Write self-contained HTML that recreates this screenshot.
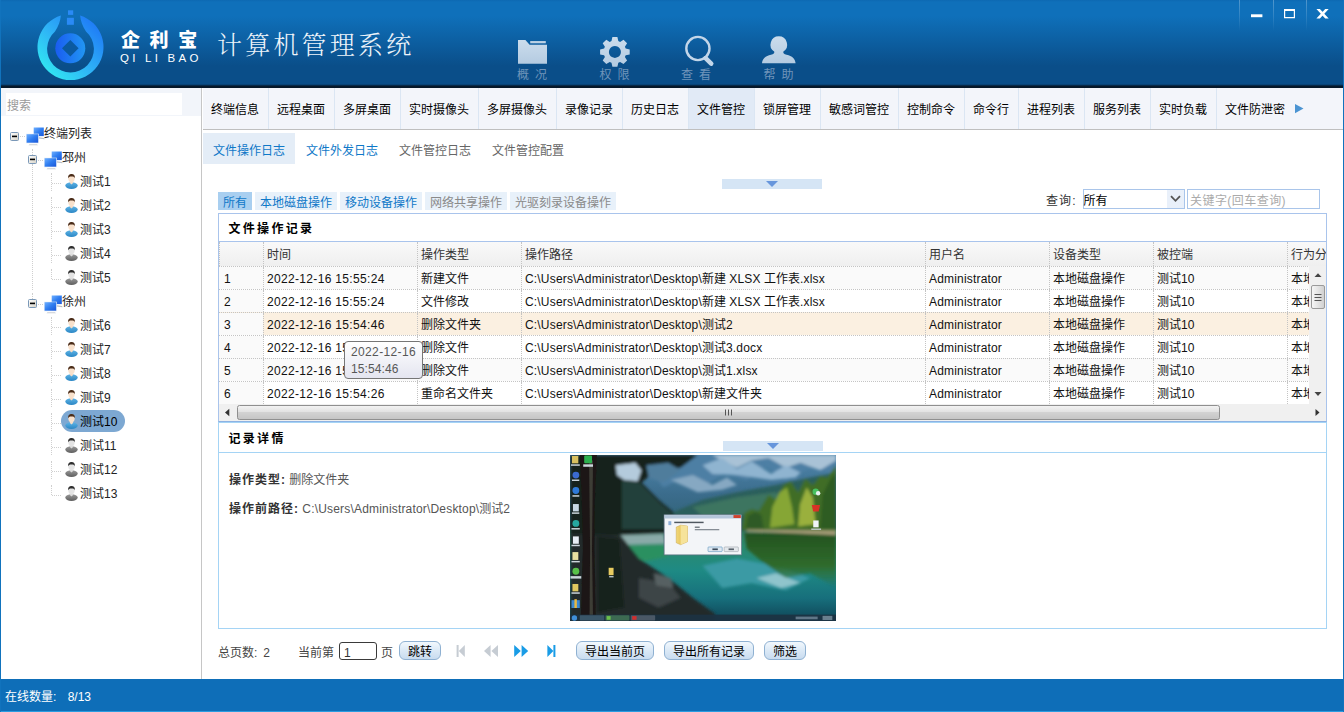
<!DOCTYPE html>
<html lang="zh-CN">
<head>
<meta charset="utf-8">
<title>企利宝 计算机管理系统</title>
<style>
*{box-sizing:border-box;margin:0;padding:0}
html,body{width:1344px;height:712px;overflow:hidden;background:#fff}
body{position:relative;font-family:"Liberation Sans","Noto Sans CJK SC",sans-serif;font-size:12px;color:#000;line-height:1}
.abs{position:absolute}
/* window frame */
#frameL{left:0;top:0;width:1px;height:712px;background:#1173bd}
#frameR{left:1343px;top:0;width:1px;height:712px;background:#1173bd}
/* header */
#hdr{left:0;top:0;width:1344px;height:88px;background:linear-gradient(to bottom,#0d69b2 0,#0f70ba 2px,#0f70ba 16px,#0a4e89 66px,#0a4e89 84px,#083a66 85px,#06182a 86px,#06182a 88px)}
#brand{left:121px;top:29px;color:#fff;font-weight:900;font-size:19px;letter-spacing:9.6px;white-space:nowrap;line-height:24px}
#brand2{left:120px;top:51px;color:#fff;font-size:11.5px;letter-spacing:3.25px;white-space:nowrap;line-height:14px;font-weight:400}
#title{left:217px;top:28px;color:#eef4fa;font-family:"Liberation Serif","Noto Serif CJK SC",serif;font-weight:300;font-size:25px;letter-spacing:3.2px;white-space:nowrap;line-height:36px}
.tool{top:36px;width:60px;height:48px;text-align:center;color:#6f94ba;font-size:12px;word-spacing:2.7px}
.tool span{position:absolute;left:0;width:60px;top:32px;line-height:14px}
.wsep{top:0;width:1px;height:31px;background:linear-gradient(to bottom,rgba(255,255,255,.28),rgba(255,255,255,0))}
/* status bar */
#status{left:0;top:679px;width:1344px;height:33px;background:#0e6eb8;border-bottom:1px solid #2a9ce0;color:#fff;padding:12px 0 0 5px}
/* left panel */
#left{left:1px;top:88px;width:200px;height:591px;background:#fff}
#leftB{left:201px;top:88px;width:1px;height:591px;background:#c6c6c6}
#searchbar{left:0;top:0;width:200px;height:28px;background:#f2f5fa}
#search{left:5px;top:5px;width:176px;height:22px;background:#fff;color:#9a9a9a;padding:7px 0 0 1px}
.tn{position:absolute;height:24px;line-height:24px;white-space:nowrap;color:#222}
.vd{width:0;border-left:1px dotted #cfcfcf}
.hd{height:0;border-top:1px dotted #cfcfcf}
/* tabs */
#tabs{left:203px;top:88px;width:1140px;height:42px;background:#f3f5fa;border-bottom:1px solid #bfbfbf}
.tab{position:absolute;top:0;height:41px;line-height:44px;overflow:hidden;text-align:center;color:#000;border-right:1px solid #dbe6f3;padding-right:1px}
.tab.on{background:#e1eaf6}
.tab:nth-last-of-type(1){border-right-color:transparent}
.stab{position:absolute;top:133px;height:31px;width:92px;line-height:37px;overflow:hidden;text-align:center;color:#666}
.stab.b{color:#0f78c8}
.stab.on{background:#e4edf7}
.flt{position:absolute;top:192px;height:18px;line-height:23px;overflow:hidden;text-align:center;background:#e8f1fa;color:#0f78c8}
.flt.g{color:#8a8a8a}
.flt.on{background:#a9cff0}
.coll{width:100px;height:10px;background:#d5e5f5}
.coll:after{content:"";position:absolute;left:44px;top:2px;border:6px solid transparent;border-top:6px solid #6796dc;border-bottom:0}
#p1{left:218px;top:213px;width:1109px;height:209px;border:1px solid #a9c4ec;border-bottom:1px solid #8db2e3;background:#fff}
.ptitle{left:9.5px;top:1px;height:27px;line-height:28px;font-weight:bold;letter-spacing:2.3px;color:#000;white-space:nowrap}
#grid{left:0;top:27px;width:1107px;height:163px;border-top:1px solid #a9c4ec;overflow:hidden}
.r{position:absolute;left:0;width:1107px;height:23px;border-top:1px dotted #c4c4c4;background:#fff}
.r.odd{background:#fafafa}
.r.sel{background:#fbf0e1}
.r.hd0{border-top:0;background:linear-gradient(to bottom,#f9f9f9,#efefef);color:#333}
.c{position:absolute;top:0;height:100%;border-left:1px dotted #c4c4c4;padding:6px 0 0 3px;white-space:nowrap;overflow:hidden;color:#111}
.r.hd0 .c{padding-top:7px;color:#333}
.c.n{border-left:0;background:#fafafa;padding-left:5px}
.r.sel .c.n{background:#fafafa}
#p2{left:218px;top:422px;width:1109px;height:207px;border:1px solid #a5d4f5;background:#fff}
.dl{white-space:nowrap;color:#333;line-height:14px}
.dl b{letter-spacing:1px}
.dv{color:#555}
.l{letter-spacing:.18px}
.d{letter-spacing:.33px}
.pg{color:#444;white-space:nowrap;line-height:14px}
.btn{top:641px;height:19px;border:1px solid #8fb1d2;border-radius:6px;background:linear-gradient(to bottom,#f2f8fd 0,#dbe9f6 50%,#c9dcef 100%);text-align:center;line-height:20px;color:#000;white-space:nowrap}
</style>
</head>
<body>
<div id="hdr" class="abs">
<svg class="abs" style="left:30px;top:4px" width="82" height="82" viewBox="30 4 82 82">
<defs>
<linearGradient id="lg1" x1="0.15" y1="0.9" x2="0.9" y2="0.15"><stop offset="0" stop-color="#31e6f2"/><stop offset="0.45" stop-color="#2fb4f6"/><stop offset="1" stop-color="#1f7cf6"/></linearGradient>
<linearGradient id="lg2" x1="0" y1="0.5" x2="1" y2="0.5"><stop offset="0" stop-color="#1a5cf0"/><stop offset="1" stop-color="#2196f3"/></linearGradient>
</defs>
<path d="M60.9 15.5 A33 33 0 1 0 80.1 15.5 C80.6 21 82.5 26 86 31.5 A23.4 23.4 0 1 1 55 31.5 C58.5 26 60.4 21 60.9 15.5Z" fill="url(#lg1)"/>
<circle cx="70.3" cy="48.3" r="15" fill="url(#lg2)"/>
<path d="M70.3 40 L78.6 48.3 L70.3 56.6 L62 48.3Z" fill="#0b5aa0"/>
<rect x="68" y="10.3" width="5.2" height="4.6" fill="#2a8af6"/>
<rect x="66.9" y="17.8" width="7" height="7" fill="#2a8af6"/>
</svg>
<div id="brand" class="abs">企利宝</div>
<div id="brand2" class="abs">QI LI BAO</div>
<div id="title" class="abs">计算机管理系统</div>
<svg class="abs" style="left:500px;top:30px" width="320" height="40" viewBox="500 30 320 40">
<defs><linearGradient id="ig" x1="0" y1="0" x2="0" y2="1"><stop offset="0" stop-color="#cbdcec"/><stop offset="1" stop-color="#b4cbe1"/></linearGradient></defs>
<g fill="url(#ig)">
<path d="M518 40 H525.4 L529.6 44.8 H547 V63.8 H518Z"/>
<rect x="530.2" y="41.1" width="15.6" height="2.2"/>
<path id="gear" fill-rule="evenodd" d="M612.4 37.1 L617.4 37.1 L618.3 41.1 L620.1 41.9 L623.5 39.7 L627.1 43.3 L624.9 46.7 L625.7 48.5 L629.7 49.4 L629.7 54.4 L625.7 55.3 L624.9 57.1 L627.1 60.5 L623.5 64.1 L620.1 61.9 L618.3 62.7 L617.4 66.7 L612.4 66.7 L611.5 62.7 L609.7 61.9 L606.3 64.1 L602.7 60.5 L604.9 57.1 L604.1 55.3 L600.1 54.4 L600.1 49.4 L604.1 48.5 L604.9 46.7 L602.7 43.3 L606.3 39.7 L609.7 41.9 L611.5 41.1 Z M614.9 45.9 a6 6 0 1 0 0.01 0Z"/>
<path d="M778.8 36.3 a8.3 8.3 0 0 1 4.6 15.2 c-0.6 1.6 0.6 2.6 3.2 3.2 c5.6 1.2 8.6 4 9 8.5 H762 c0.4 -4.5 3.4 -7.3 9 -8.5 c2.6 -0.6 3.8 -1.6 3.2 -3.2 a8.3 8.3 0 0 1 4.6 -15.2Z"/>
</g>
<circle cx="697.9" cy="48.5" r="11.6" fill="none" stroke="#c3d6e9" stroke-width="2.4"/>
<path d="M705.6 58.2 L711.2 63.6" stroke="#c3d6e9" stroke-width="4.6" stroke-linecap="round"/>
</svg>
<div class="tool abs" style="left:502px"><span>概 况</span></div>
<div class="tool abs" style="left:584.6px"><span>权 限</span></div>
<div class="tool abs" style="left:666px"><span>查 看</span></div>
<div class="tool abs" style="left:748.5px"><span>帮 助</span></div>
<div class="wsep abs" style="left:1239px"></div>
<div class="wsep abs" style="left:1273px"></div>
<div class="wsep abs" style="left:1306px"></div>
<svg class="abs" style="left:1245px;top:5px" width="90" height="18" viewBox="1245 5 90 18">
<rect x="1251" y="14.3" width="11.4" height="2.9" fill="#fff"/>
<path d="M1284 9 h11 v9.2 h-11Z M1285.2 11 v6 h8.6 v-6Z" fill="#fff" fill-rule="evenodd"/>
<path d="M1316.4 8.9 h3.5 l8.8 9.5 h-3.5Z M1325.2 8.9 h3.5 l-8.8 9.5 h-3.5Z" fill="#fff"/>
</svg>
</div>
<div id="status" class="abs">在线数量<span style="letter-spacing:4px">: </span>8/13</div>
<div id="left" class="abs">
  <div id="searchbar" class="abs"><div id="search" class="abs">搜索</div></div>
</div>
<svg width="0" height="0" style="position:absolute">
<defs>
<linearGradient id="mon" x1="0" y1="0" x2="1" y2="1"><stop offset="0" stop-color="#6fb0ff"/><stop offset="0.5" stop-color="#2f7df0"/><stop offset="1" stop-color="#1a56d8"/></linearGradient>
<linearGradient id="ub" x1="0" y1="0" x2="0" y2="1"><stop offset="0" stop-color="#5fb4e6"/><stop offset="1" stop-color="#2a86c4"/></linearGradient>
<linearGradient id="ug" x1="0" y1="0" x2="0" y2="1"><stop offset="0" stop-color="#9a9a9a"/><stop offset="1" stop-color="#5e5e5e"/></linearGradient>
<linearGradient id="bx" x1="0" y1="0" x2="1" y2="1"><stop offset="0" stop-color="#ffffff"/><stop offset="1" stop-color="#d6d2c6"/></linearGradient>
<symbol id="pcs" viewBox="0 0 20 20" overflow="visible">
<path d="M13 10.2 l5 0.8 l0.6 1.2 l-6 -0.6Z" fill="#b9bec6"/>
<rect x="7.7" y="0.5" width="10.1" height="8.6" fill="url(#mon)"/>
<path d="M3.5 17.2 h7.5 l1 1 h-9.5Z" fill="#c9cdd3"/>
<rect x="0" y="6.7" width="12.8" height="9.6" fill="#e9eef6"/>
<rect x="0.6" y="7.2" width="11.6" height="8.5" fill="url(#mon)"/>
</symbol>
<symbol id="usrb" viewBox="0 0 13 15" overflow="visible">
<ellipse cx="6.5" cy="11.6" rx="6.2" ry="3.4" fill="url(#ub)"/>
<path d="M4.9 7 h3.2 v2 l-1.6 1.6 l-1.6 -1.6Z" fill="#f6dcc6"/>
<ellipse cx="6.5" cy="4.4" rx="3.2" ry="3.7" fill="#f8e1cc"/>
<path d="M3.2 4.2 C2.8 1 4.6 0 6.6 0 C8.8 0 10.2 1.2 9.8 4.2 C9.3 2.8 8.2 2.4 6.5 2.6 C5 2.4 3.8 2.9 3.2 4.2Z" fill="#4a2c18"/>
</symbol>
<symbol id="usrg" viewBox="0 0 13 15" overflow="visible">
<ellipse cx="6.5" cy="11.6" rx="6.2" ry="3.4" fill="url(#ug)"/>
<path d="M4.9 7 h3.2 v2 l-1.6 1.6 l-1.6 -1.6Z" fill="#dcdcdc"/>
<ellipse cx="6.5" cy="4.4" rx="3.2" ry="3.7" fill="#e4e4e4"/>
<path d="M3.2 4.2 C2.8 1 4.6 0 6.6 0 C8.8 0 10.2 1.2 9.8 4.2 C9.3 2.8 8.2 2.4 6.5 2.6 C5 2.4 3.8 2.9 3.2 4.2Z" fill="#2e2e2e"/>
</symbol>
<symbol id="minus" viewBox="0 0 9 9" overflow="visible">
<rect x="0.5" y="0.5" width="8" height="8" rx="1" fill="url(#bx)" stroke="#7a98b8"/>
<rect x="2" y="3.6" width="5" height="1.6" fill="#000"/>
</symbol>
</defs></svg>
<div id="tree" class="abs" style="left:0;top:0;width:202px;height:679px">
<div class="hd abs" style="left:20px;top:136px;width:5px"></div>
<div class="vd abs" style="left:32px;top:149px;height:6px"></div>
<div class="vd abs" style="left:32px;top:164px;height:126px"></div>
<div class="vd abs" style="left:32px;top:293px;height:6px"></div>
<div class="hd abs" style="left:38px;top:160px;width:5px"></div>
<div class="hd abs" style="left:38px;top:304px;width:5px"></div>
<svg class="abs" style="left:10px;top:132px" width="9" height="9"><use href="#minus"/></svg><svg class="abs" style="left:26px;top:127px" width="20" height="20"><use href="#pcs"/></svg><div class="tn" style="left:44px;top:122px">终端列表</div>
<svg class="abs" style="left:28px;top:155px" width="9" height="9"><use href="#minus"/></svg><svg class="abs" style="left:44px;top:151px" width="20" height="20"><use href="#pcs"/></svg><div class="tn" style="left:62px;top:146px">邳州</div>
<div class="vd abs" style="left:51px;top:173px;height:18px"></div><div class="hd abs" style="left:52px;top:183px;width:9px"></div><svg class="abs" style="left:64.5px;top:174px" width="13" height="15"><use href="#usrb"/></svg><div class="tn" style="left:80px;top:170px">测试1</div>
<div class="vd abs" style="left:51px;top:197px;height:18px"></div><div class="hd abs" style="left:52px;top:207px;width:9px"></div><svg class="abs" style="left:64.5px;top:198px" width="13" height="15"><use href="#usrb"/></svg><div class="tn" style="left:80px;top:194px">测试2</div>
<div class="vd abs" style="left:51px;top:221px;height:18px"></div><div class="hd abs" style="left:52px;top:231px;width:9px"></div><svg class="abs" style="left:64.5px;top:222px" width="13" height="15"><use href="#usrb"/></svg><div class="tn" style="left:80px;top:218px">测试3</div>
<div class="vd abs" style="left:51px;top:245px;height:18px"></div><div class="hd abs" style="left:52px;top:255px;width:9px"></div><svg class="abs" style="left:64.5px;top:246px" width="13" height="15"><use href="#usrg"/></svg><div class="tn" style="left:80px;top:242px">测试4</div>
<div class="vd abs" style="left:51px;top:269px;height:10px"></div><div class="hd abs" style="left:52px;top:279px;width:9px"></div><svg class="abs" style="left:64.5px;top:270px" width="13" height="15"><use href="#usrg"/></svg><div class="tn" style="left:80px;top:266px">测试5</div>
<svg class="abs" style="left:28px;top:299px" width="9" height="9"><use href="#minus"/></svg><svg class="abs" style="left:44px;top:295px" width="20" height="20"><use href="#pcs"/></svg><div class="tn" style="left:62px;top:290px">徐州</div>
<div class="vd abs" style="left:51px;top:317px;height:18px"></div><div class="hd abs" style="left:52px;top:327px;width:9px"></div><svg class="abs" style="left:64.5px;top:318px" width="13" height="15"><use href="#usrb"/></svg><div class="tn" style="left:80px;top:314px">测试6</div>
<div class="vd abs" style="left:51px;top:341px;height:18px"></div><div class="hd abs" style="left:52px;top:351px;width:9px"></div><svg class="abs" style="left:64.5px;top:342px" width="13" height="15"><use href="#usrb"/></svg><div class="tn" style="left:80px;top:338px">测试7</div>
<div class="vd abs" style="left:51px;top:365px;height:18px"></div><div class="hd abs" style="left:52px;top:375px;width:9px"></div><svg class="abs" style="left:64.5px;top:366px" width="13" height="15"><use href="#usrb"/></svg><div class="tn" style="left:80px;top:362px">测试8</div>
<div class="vd abs" style="left:51px;top:389px;height:18px"></div><div class="hd abs" style="left:52px;top:399px;width:9px"></div><svg class="abs" style="left:64.5px;top:390px" width="13" height="15"><use href="#usrb"/></svg><div class="tn" style="left:80px;top:386px">测试9</div>
<div class="vd abs" style="left:51px;top:413px;height:18px"></div><div class="hd abs" style="left:52px;top:423px;width:9px"></div><div class="abs" style="left:61px;top:410px;width:64px;height:22px;border-radius:11px;background:#7da8d2"></div><svg class="abs" style="left:64.5px;top:414px" width="13" height="15"><use href="#usrb"/></svg><div class="tn" style="left:80px;top:410px;color:#000">测试10</div>
<div class="vd abs" style="left:51px;top:437px;height:18px"></div><div class="hd abs" style="left:52px;top:447px;width:9px"></div><svg class="abs" style="left:64.5px;top:438px" width="13" height="15"><use href="#usrg"/></svg><div class="tn" style="left:80px;top:434px">测试11</div>
<div class="vd abs" style="left:51px;top:461px;height:18px"></div><div class="hd abs" style="left:52px;top:471px;width:9px"></div><svg class="abs" style="left:64.5px;top:462px" width="13" height="15"><use href="#usrg"/></svg><div class="tn" style="left:80px;top:458px">测试12</div>
<div class="vd abs" style="left:51px;top:485px;height:10px"></div><div class="hd abs" style="left:52px;top:495px;width:9px"></div><svg class="abs" style="left:64.5px;top:486px" width="13" height="15"><use href="#usrg"/></svg><div class="tn" style="left:80px;top:482px">测试13</div>
</div>
<div id="leftB" class="abs"></div>
<div id="tabs" class="abs"><div class="tab" style="left:0px;width:66px">终端信息</div><div class="tab" style="left:66px;width:66px">远程桌面</div><div class="tab" style="left:132px;width:66px">多屏桌面</div><div class="tab" style="left:198px;width:78px">实时摄像头</div><div class="tab" style="left:276px;width:78px">多屏摄像头</div><div class="tab" style="left:354px;width:66px">录像记录</div><div class="tab" style="left:420px;width:66px">历史日志</div><div class="tab on" style="left:486px;width:66px">文件管控</div><div class="tab" style="left:552px;width:66px">锁屏管理</div><div class="tab" style="left:618px;width:78px">敏感词管控</div><div class="tab" style="left:696px;width:66px">控制命令</div><div class="tab" style="left:762px;width:54px">命令行</div><div class="tab" style="left:816px;width:66px">进程列表</div><div class="tab" style="left:882px;width:66px">服务列表</div><div class="tab" style="left:948px;width:66px">实时负载</div><div class="tab" style="left:1014px;width:78px">文件防泄密</div><svg class="abs" style="left:1092px;top:16px" width="9" height="10"><path d="M0 0 L8.5 4.6 L0 9.2Z" fill="#4b94d2"/></svg></div>
<div class="stab b on" style="left:203px">文件操作日志</div>
<div class="stab b" style="left:296px">文件外发日志</div>
<div class="stab" style="left:389px">文件管控日志</div>
<div class="stab" style="left:482px">文件管控配置</div>
<div class="coll abs" style="left:722px;top:179px"></div>
<div class="flt on" style="left:218px;width:34px">所有</div>
<div class="flt" style="left:255px;width:82px">本地磁盘操作</div>
<div class="flt" style="left:340px;width:82px">移动设备操作</div>
<div class="flt g" style="left:425px;width:82px">网络共享操作</div>
<div class="flt g" style="left:510px;width:106px">光驱刻录设备操作</div>
<div class="abs" style="left:1046px;top:195px;color:#333;letter-spacing:1.1px">查询:</div>
<div class="abs" style="left:1083px;top:189px;width:102px;height:20px;border:1px solid #a9c5ea;background:#fff">
<div class="abs" style="left:-0.5px;top:5px;color:#000">所有</div>
<div class="abs" style="left:83px;top:0;width:17px;height:18px;background:#e9f0fa"></div>
<svg class="abs" style="left:86px;top:5px" width="11" height="8"><path d="M1 1.2 L5.5 5.8 L10 1.2" fill="none" stroke="#555" stroke-width="1.8"/></svg>
</div>
<div class="abs" style="left:1187px;top:189px;width:133px;height:20px;border:1px solid #a9c5ea;background:#fff"><div class="abs" style="left:2px;top:5px;color:#ababab;white-space:nowrap;letter-spacing:.45px">关键字(回车查询)</div></div>

<div id="p1" class="abs">
<div class="ptitle abs">文件操作记录</div>
<div id="grid" class="abs">
<div class="r hd0" style="top:0;height:24px"><div class="c " style="left:0px;width:44px"></div><div class="c " style="left:44px;width:154px">时间</div><div class="c " style="left:198px;width:104px">操作类型</div><div class="c " style="left:302px;width:404px">操作路径</div><div class="c " style="left:706px;width:124px">用户名</div><div class="c " style="left:830px;width:104px">设备类型</div><div class="c " style="left:934px;width:134px">被控端</div><div class="c " style="left:1068px;width:39px">行为分类</div></div>
<div class="r odd" style="top:24px"><div class="c n" style="left:0px;width:44px">1</div><div class="c " style="left:44px;width:154px"><span class="d">2022-12-16 15:55:24</span></div><div class="c " style="left:198px;width:104px">新建文件</div><div class="c " style="left:302px;width:404px"><span class="l">C:\Users\Administrator\Desktop\</span>新建 <span class="l">XLSX</span> 工作表<span class="l">.xlsx</span></div><div class="c " style="left:706px;width:124px"><span class="l">Administrator</span></div><div class="c " style="left:830px;width:104px">本地磁盘操作</div><div class="c " style="left:934px;width:134px">测试10</div><div class="c " style="left:1068px;width:39px">本地磁盘</div></div>
<div class="r" style="top:47px"><div class="c n" style="left:0px;width:44px">2</div><div class="c " style="left:44px;width:154px"><span class="d">2022-12-16 15:55:24</span></div><div class="c " style="left:198px;width:104px">文件修改</div><div class="c " style="left:302px;width:404px"><span class="l">C:\Users\Administrator\Desktop\</span>新建 <span class="l">XLSX</span> 工作表<span class="l">.xlsx</span></div><div class="c " style="left:706px;width:124px"><span class="l">Administrator</span></div><div class="c " style="left:830px;width:104px">本地磁盘操作</div><div class="c " style="left:934px;width:134px">测试10</div><div class="c " style="left:1068px;width:39px">本地磁盘</div></div>
<div class="r sel" style="top:70px"><div class="c n" style="left:0px;width:44px">3</div><div class="c " style="left:44px;width:154px"><span class="d">2022-12-16 15:54:46</span></div><div class="c " style="left:198px;width:104px">删除文件夹</div><div class="c " style="left:302px;width:404px"><span class="l">C:\Users\Administrator\Desktop\</span>测试2</div><div class="c " style="left:706px;width:124px"><span class="l">Administrator</span></div><div class="c " style="left:830px;width:104px">本地磁盘操作</div><div class="c " style="left:934px;width:134px">测试10</div><div class="c " style="left:1068px;width:39px">本地磁盘</div></div>
<div class="r" style="top:93px"><div class="c n" style="left:0px;width:44px">4</div><div class="c " style="left:44px;width:154px"><span class="d">2022-12-16 15:54:40</span></div><div class="c " style="left:198px;width:104px">删除文件</div><div class="c " style="left:302px;width:404px"><span class="l">C:\Users\Administrator\Desktop\</span>测试<span class="l">3.docx</span></div><div class="c " style="left:706px;width:124px"><span class="l">Administrator</span></div><div class="c " style="left:830px;width:104px">本地磁盘操作</div><div class="c " style="left:934px;width:134px">测试10</div><div class="c " style="left:1068px;width:39px">本地磁盘</div></div>
<div class="r odd" style="top:116px"><div class="c n" style="left:0px;width:44px">5</div><div class="c " style="left:44px;width:154px"><span class="d">2022-12-16 15:54:36</span></div><div class="c " style="left:198px;width:104px">删除文件</div><div class="c " style="left:302px;width:404px"><span class="l">C:\Users\Administrator\Desktop\</span>测试<span class="l">1.xlsx</span></div><div class="c " style="left:706px;width:124px"><span class="l">Administrator</span></div><div class="c " style="left:830px;width:104px">本地磁盘操作</div><div class="c " style="left:934px;width:134px">测试10</div><div class="c " style="left:1068px;width:39px">本地磁盘</div></div>
<div class="r" style="top:139px"><div class="c n" style="left:0px;width:44px">6</div><div class="c " style="left:44px;width:154px"><span class="d">2022-12-16 15:54:26</span></div><div class="c " style="left:198px;width:104px">重命名文件夹</div><div class="c " style="left:302px;width:404px"><span class="l">C:\Users\Administrator\Desktop\</span>新建文件夹</div><div class="c " style="left:706px;width:124px"><span class="l">Administrator</span></div><div class="c " style="left:830px;width:104px">本地磁盘操作</div><div class="c " style="left:934px;width:134px">测试10</div><div class="c " style="left:1068px;width:39px">本地磁盘</div></div>
</div>
<div class="abs" style="left:1090px;top:52px;width:17px;height:138px;background:#f0f0f0"></div>
<svg class="abs" style="left:1091px;top:52px" width="16" height="138" viewBox="0 0 16 138">
<defs><linearGradient id="vth" x1="0" y1="0" x2="1" y2="0"><stop offset="0" stop-color="#f7f7f7"/><stop offset="0.5" stop-color="#e4e4e4"/><stop offset="1" stop-color="#cfcfcf"/></linearGradient></defs>
<path d="M4.5 11 L8 7.2 L11.5 11Z" fill="#444"/>
<rect x="1.5" y="19.5" width="13" height="23" rx="1.5" fill="url(#vth)" stroke="#9a9a9a"/>
<path d="M4.5 28.5 h7 M4.5 31.5 h7 M4.5 34.5 h7" stroke="#555" stroke-width="1"/>
<path d="M4.5 126 L8 130 L11.5 126Z" fill="#444"/>
</svg>
<div class="abs" style="left:0;top:190px;width:1107px;height:17px;background:#f0f0f0"></div>
<svg class="abs" style="left:0;top:190px" width="1107" height="17" viewBox="0 0 1107 17">
<defs><linearGradient id="hth" x1="0" y1="0" x2="0" y2="1"><stop offset="0" stop-color="#f4f4f4"/><stop offset="0.45" stop-color="#e2e2e2"/><stop offset="0.5" stop-color="#d2d2d2"/><stop offset="1" stop-color="#c4c4c4"/></linearGradient></defs>
<path d="M10.3 4.8 L6 8.5 L10.3 12.2Z" fill="#333"/>
<rect x="18.5" y="1.5" width="982" height="14" rx="2" fill="url(#hth)" stroke="#8f8f8f"/>
<path d="M506.5 5.5 v6 M509.5 5.5 v6 M512.5 5.5 v6" stroke="#555" stroke-width="1"/>
<path d="M1096.5 5 L1100.5 8.5 L1096.5 12Z" fill="#333"/>
</svg>
</div>
<div class="abs" style="left:344px;top:341px;width:79px;height:38px;border:1px solid #767676;border-radius:4px;background:linear-gradient(to bottom,#ffffff,#e4e5f0);color:#575757;padding:2px 0 0 6px;line-height:17px;white-space:nowrap"><span style="letter-spacing:.36px">2022-12-16</span><br><span style="letter-spacing:.09px">15:54:46</span></div>
<div id="p2" class="abs">
<div class="ptitle abs" style="top:2px">记录详情</div>
<div class="abs" style="left:0;top:29px;width:1107px;height:1px;background:#a5d4f5"></div>
</div>
<div class="coll abs" style="left:723px;top:441px"></div>
<div class="abs dl" style="left:229px;top:473px"><b>操作类型:</b> <span class="dv">删除文件夹</span></div>
<div class="abs dl" style="left:229px;top:502px"><b>操作前路径:</b> <span class="dv"><span class="l"><span class="l">C:\Users\Administrator\Desktop\</span></span>测试2</span></div>
<svg class="abs" style="left:570px;top:455px" width="266" height="166" viewBox="18 18 1087 677" preserveAspectRatio="none">
<defs>
<linearGradient id="sky" x1="0" y1="0" x2="0" y2="1"><stop offset="0" stop-color="#4f86ac"/><stop offset="0.5" stop-color="#3b6c8c"/><stop offset="1" stop-color="#2d6070"/></linearGradient>
<linearGradient id="lake" x1="0" y1="0" x2="0" y2="1"><stop offset="0" stop-color="#3a7f66"/><stop offset="0.18" stop-color="#2c8a6e"/><stop offset="0.45" stop-color="#1e8a84"/><stop offset="0.75" stop-color="#176f7c"/><stop offset="1" stop-color="#0f4456"/></linearGradient>
<linearGradient id="refl" x1="0" y1="0" x2="0" y2="1"><stop offset="0" stop-color="#23521f"/><stop offset="0.6" stop-color="#2f6a2c"/><stop offset="1" stop-color="#2f6a2c" stop-opacity="0"/></linearGradient>
<linearGradient id="fold" x1="0" y1="0" x2="1" y2="0"><stop offset="0" stop-color="#f2d878"/><stop offset="1" stop-color="#d9b040"/></linearGradient>
<filter id="bl" x="-5%" y="-5%" width="110%" height="110%"><feGaussianBlur stdDeviation="7"/></filter>
<filter id="bl2" x="-5%" y="-5%" width="110%" height="110%"><feGaussianBlur stdDeviation="3"/></filter>
<clipPath id="pc"><rect x="18" y="18" width="1087" height="677"/></clipPath>
</defs>
<g clip-path="url(#pc)">
<rect x="18" y="18" width="1087" height="320" fill="url(#sky)"/>
<rect x="18" y="322" width="1087" height="373" fill="url(#lake)"/>
<g filter="url(#bl)">
<path d="M300 18 L1105 18 L1105 90 L1000 70 L900 120 L820 60 L740 120 L650 90 L560 150 L480 110 L400 150 L330 60Z" fill="#4d7fa4"/>
<path d="M640 40 L700 70 L760 40 L830 30 L900 70 L960 50 L1040 80 L1105 40 L1105 18 L600 18Z" fill="#a9c2d6"/>
<path d="M430 120 L520 100 L600 140 L660 110 L700 140 L640 160 L540 170Z" fill="#86a8c2"/>
<path d="M560 60 L640 30 L700 75 L760 45 L840 95 L900 60 L960 90 L940 110 L840 120 L700 100 L600 95Z" fill="#8fb4d0"/>
<path d="M420 260 L560 200 L700 170 L860 140 L1000 110 L1105 90 L1105 330 L420 330Z" fill="#2c5f5c"/>
<path d="M520 230 L700 190 L860 170 L900 220 L760 260 L560 270Z" fill="#3c7460"/>
<path d="M560 470 L700 440 L860 470 L1000 520 L900 570 L760 540 L640 560Z" fill="#3a9aa4"/>
<path d="M780 520 L860 500 L960 540 L880 560Z" fill="#8fc4cc"/>
<path d="M730 335 L1105 335 L1105 560 L1000 500 L900 520 L800 450 L740 400Z" fill="url(#refl)"/>
<path d="M720 325 L730 255 L760 238 L790 245 L830 180 L860 200 L890 140 L920 125 L950 170 L980 115 L1010 140 L1040 105 L1070 110 L1105 60 L1105 330Z" fill="#3f6d27"/>
<path d="M835 315 L845 230 L875 170 L905 150 L925 230 L935 300 Z" fill="#86a636"/>
<path d="M950 310 L958 220 L985 150 L1010 190 L1022 300Z" fill="#9ab03e"/>
<path d="M735 320 L745 265 L775 250 L800 262 L810 320Z" fill="#2d5a26"/>
<path d="M1040 320 L1050 180 L1080 120 L1105 90 L1105 320Z" fill="#2f5c22"/>
<path d="M740 322 L1105 326 L1105 345 L900 336 L740 330Z" fill="#a39a76"/>
<path d="M18 18 L540 18 L470 70 L360 90 L310 130 L380 200 L440 250 L445 335 L230 345 L18 345Z" fill="#15241f"/>
<path d="M230 120 L300 130 L380 210 L440 260 L440 320 L230 320Z" fill="#21403a"/>
<path d="M205 60 L285 50 L310 80 L295 125 L240 120 L210 100Z" fill="#b4cbdc"/>
<path d="M125 18 L530 18 L500 48 L430 40 L390 75 L320 38 L250 55 L200 45 L125 80Z" fill="#16241f"/>
<path d="M330 60 L420 50 L470 80 L400 130 L340 110Z" fill="#4f7d9c"/>
<path d="M215 345 L400 340 L410 380 L215 385Z" fill="#8aaaa8"/>
<path d="M215 388 L400 385 L420 430 L330 450 L225 420Z" fill="#2a9060"/>
<path d="M18 340 L225 345 L300 440 L420 520 L520 600 L610 665 L610 695 L18 695Z" fill="#22292a"/>
<path d="M300 520 L420 540 L470 600 L380 640 L300 600Z" fill="#3c4446"/>
<path d="M360 500 L430 520 L440 560 L370 550Z" fill="#566062"/>
<path d="M130 350 L220 360 L240 640 L130 660Z" fill="#18231d"/>
</g>
<path d="M58 18 L128 18 L120 200 L118 400 L124 695 L62 695 L70 400 L66 200Z" fill="#1a1814" filter="url(#bl2)"/>
<path d="M96 40 L112 40 L108 400 L112 680 L98 680 L100 400Z" fill="#3d3d36" filter="url(#bl2)"/>
<rect x="18" y="669" width="1087" height="26" fill="#1c3242" opacity="0.92"/>
<circle cx="36" cy="683" r="11" fill="#3f8fd8"/>
<rect x="58" y="672" width="100" height="21" rx="3" fill="#3a5668"/>
<rect x="163" y="672" width="98" height="21" rx="3" fill="#3c6a52"/><rect x="168" y="675" width="16" height="15" fill="#6cc04c"/>
<rect x="266" y="672" width="100" height="21" rx="3" fill="#4a5866"/><rect x="272" y="675" width="18" height="15" fill="#d03030"/>
<rect x="940" y="677" width="90" height="11" fill="#8fa4b4" opacity="0.6"/><rect x="1050" y="674" width="40" height="17" fill="#9fb2c0" opacity="0.6"/>
<g filter="url(#bl2)">
<rect x="26" y="22" width="26" height="30" fill="#d8c060"/><rect x="22" y="56" width="36" height="6" fill="#ccd6dc"/>
<rect x="76" y="20" width="32" height="32" rx="4" fill="#2fb050"/><rect x="72" y="56" width="40" height="10" fill="#ccd6dc"/>
<circle cx="42" cy="100" r="14" fill="#3a6ad0"/><rect x="26" y="118" width="30" height="6" fill="#ccd6dc"/>
<circle cx="42" cy="163" r="14" fill="#2f7ad8"/><rect x="28" y="182" width="28" height="6" fill="#ccd6dc"/>
<rect x="30" y="218" width="24" height="30" fill="#c8d8e4"/><rect x="26" y="252" width="30" height="6" fill="#ccd6dc"/>
<circle cx="42" cy="297" r="14" fill="#28a8a0"/><rect x="24" y="316" width="34" height="6" fill="#ccd6dc"/>
<rect x="30" y="350" width="24" height="30" fill="#e8eef4"/><rect x="24" y="384" width="34" height="6" fill="#ccd6dc"/>
<rect x="28" y="414" width="24" height="32" fill="#e8e0a0"/><rect x="24" y="450" width="34" height="6" fill="#ccd6dc"/>
<circle cx="42" cy="492" r="14" fill="#58c048"/><rect x="20" y="512" width="44" height="10" fill="#ccd6dc"/>
<rect x="28" y="544" width="24" height="30" fill="#e0c860"/><rect x="24" y="578" width="34" height="6" fill="#ccd6dc"/>
<rect x="24" y="610" width="34" height="32" fill="#3a88d0"/><rect x="36" y="606" width="10" height="36" fill="#e8b840"/>
<rect x="176" y="478" width="20" height="30" fill="#e8cc60"/><rect x="178" y="512" width="18" height="5" fill="#ccd6dc"/>
<circle cx="1022" cy="168" r="13" fill="#48c060"/><circle cx="1032" cy="174" r="9" fill="#e8f0f0"/>
<path d="M1006 222 h34 l-6 26 h-22Z" fill="#d83028"/>
<rect x="1012" y="285" width="22" height="28" fill="#f0f4f8"/><rect x="1004" y="318" width="40" height="5" fill="#ccd6dc"/>
</g>
<rect x="400" y="260" width="320" height="168" fill="#5d6f80" opacity="0.55"/>
<rect x="403" y="262" width="315" height="163" fill="#f3f5f8" stroke="#6c7d8f" stroke-width="2"/>
<rect x="404" y="263" width="313" height="14" fill="#b4c6da"/>
<rect x="686" y="263" width="30" height="12" fill="#d0432e"/>
<rect x="420" y="288" width="12" height="16" fill="#8fb0d8"/>
<rect x="444" y="290" width="120" height="6" fill="#505860"/>
<rect x="528" y="310" width="20" height="5" fill="#606870"/><rect x="528" y="320" width="100" height="5" fill="#808890"/>
<path d="M452 312 L470 304 L498 308 L498 372 L470 384 L452 376Z" fill="url(#fold)" stroke="#b8923a" stroke-width="1.5"/>
<path d="M470 304 L498 308 L498 372 L470 384Z" fill="#f6e39a"/>
<rect x="582" y="393" width="58" height="19" rx="3" fill="#dfe8f2" stroke="#3c7fb1" stroke-width="2"/><rect x="600" y="399" width="22" height="7" fill="#3a4a5a"/>
<rect x="648" y="393" width="58" height="19" rx="3" fill="#e4e8ec" stroke="#8c949c" stroke-width="2"/><rect x="666" y="399" width="22" height="7" fill="#59636d"/>
</g>
</svg>
<div class="abs pg" style="left:218px;top:646px;word-spacing:2.5px">总页数: 2</div>
<div class="abs pg" style="left:298px;top:646px">当前第</div>
<div class="abs" style="left:339px;top:642px;width:38px;height:18px;border:1px solid #3a3a3a;border-radius:3px;background:#fff;padding:4px 0 0 4px;color:#333">1</div>
<div class="abs pg" style="left:381px;top:646px">页</div>
<div class="btn abs" style="left:399px;width:42px">跳转</div>
<svg class="abs" style="left:450px;top:642px" width="115" height="18" viewBox="450 642 115 18">
<g fill="#c6ccd3"><rect x="456.6" y="645" width="2" height="12"/><path d="M464.8 645 L458.8 651 L464.8 657Z"/>
<path d="M490.6 645 L484 651 L490.6 657Z M498 645 L491.4 651 L498 657Z"/></g>
<g fill="#199ce6"><path d="M514.2 645 L520.8 651 L514.2 657Z M521.6 645 L528.2 651 L521.6 657Z"/>
<path d="M547.4 645 L553.4 651 L547.4 657Z"/><rect x="553.4" y="645" width="2" height="12"/></g>
</svg>
<div class="btn abs" style="left:576px;width:78px">导出当前页</div>
<div class="btn abs" style="left:664px;width:90px">导出所有记录</div>
<div class="btn abs" style="left:764px;width:42px">筛选</div>


<div id="frameL" class="abs"></div>
<div id="frameR" class="abs"></div>
</body>
</html>
